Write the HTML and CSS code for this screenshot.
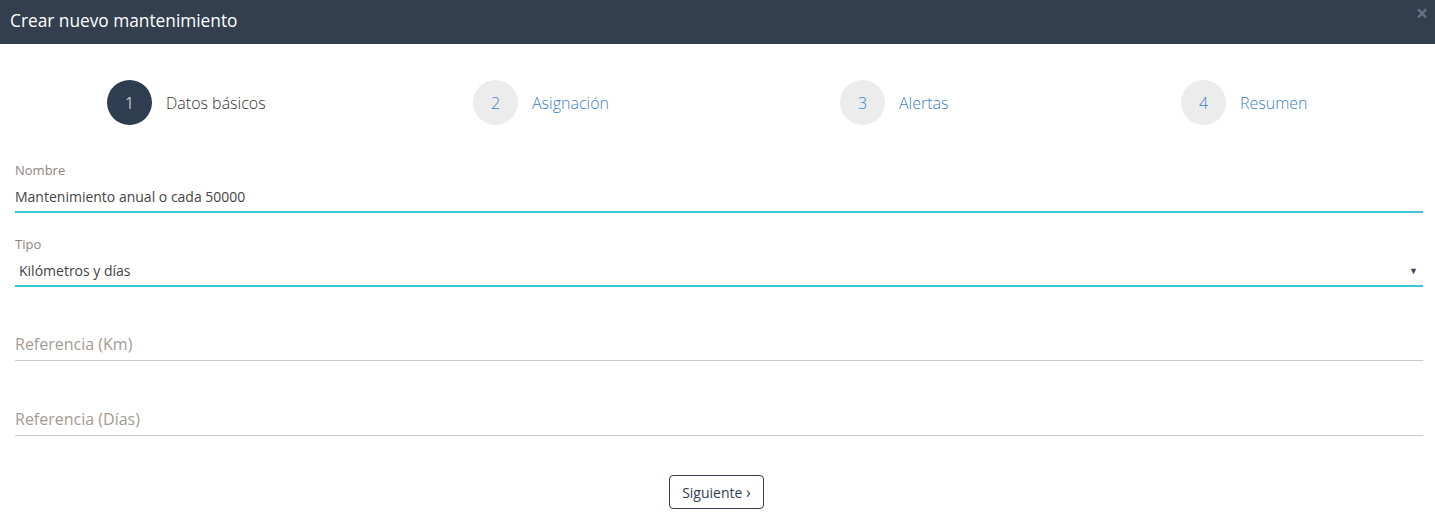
FILE: index.html
```html
<!DOCTYPE html>
<html lang="es">
<head>
<meta charset="utf-8">
<title>Crear nuevo mantenimiento</title>
<link rel="stylesheet" href="styles.css">
</head>
<body>
<div class="modal">
  <header class="modal-header">
    <h1 class="modal-title">Crear nuevo mantenimiento</h1>
    <span class="close">×</span>
  </header>
  <div class="steps">
    <div class="step step-1 active"><span class="num">1</span><span class="label">Datos básicos</span></div>
    <div class="step step-2"><span class="num">2</span><span class="label">Asignación</span></div>
    <div class="step step-3"><span class="num">3</span><span class="label">Alertas</span></div>
    <div class="step step-4"><span class="num">4</span><span class="label">Resumen</span></div>
  </div>
  <form class="form">
    <div class="field filled f-nombre">
      <label class="flabel">Nombre</label>
      <div class="value">Mantenimiento anual o cada 50000</div>
    </div>
    <div class="field filled select f-tipo">
      <label class="flabel">Tipo</label>
      <div class="value">Kilómetros y días<span class="caret">▼</span></div>
    </div>
    <div class="field empty f-km">
      <div class="placeholder">Referencia (Km)</div>
    </div>
    <div class="field empty f-dias">
      <div class="placeholder">Referencia (Días)</div>
    </div>
    <div class="actions">
      <button type="button" class="btn">Siguiente <span class="chev">›</span></button>
    </div>
  </form>
</div>
</body>
</html>
```
FILE: styles.css
```css
* { box-sizing: border-box; }
html, body { margin: 0; padding: 0; background: #fff; }
body { font-family: "Open Sans", "Liberation Sans", sans-serif; color: #333; }
.modal { width: 1435px; height: 523px; background: #fff; overflow: hidden; }
.modal-header {
  height: 44px;
  background: #333f4f;
  display: flex;
  align-items: center;
  padding: 0 10px;
  position: relative;
}
.modal-title {
  margin: 0;
  font-size: 17.3px;
  font-weight: 400;
  color: #fff;
  line-height: 1;
  padding-bottom: 2px;
}
.close {
  position: absolute;
  top: 2px;
  right: 7px;
  font-size: 21px;
  font-weight: 700;
  line-height: 22px;
  color: #687284;
}
.steps {
  display: flex;
  padding: 36px 0 0 107px;
  height: 111px;
}
.step { display: flex; align-items: center; height: 45px; }
.step-1 { width: 366px; }
.step-2 { width: 367px; }
.step-3 { width: 341px; }
.num {
  width: 45px; height: 45px; border-radius: 50%;
  background: #ececec;
  color: #3b7fc4;
  display: flex; align-items: center; justify-content: center;
  font-size: 16px;
  font-weight: 300;
  margin-right: 14px;
}
.label { font-size: 16px; font-weight: 300; color: #3b7fc4; }
.step.active .num { background: #2e3d50; color: #fff; }
.step.active .label { color: #333; }
.form { padding: 6px 12px 0 15px; }
.flabel {
  display: block;
  font-size: 13px;
  color: #8f8681;
  line-height: 18px;
  margin-bottom: 4px;
}
.f-tipo { margin-top: 22px; }
.value {
  font-size: 14px;
  color: #444;
  line-height: 28px;
  border-bottom: 2px solid #3ec6d3;
}
.field.select .value { padding-left: 4px; display: flex; justify-content: space-between; align-items: center; }
.caret { font-size: 9px; color: #444; margin-right: 5px; }
.field.f-km { margin-top: 45px; }
.field.f-dias { margin-top: 46px; }
.placeholder {
  font-size: 16px;
  color: #a39a94;
  line-height: 24px;
  padding-bottom: 4px;
  border-bottom: 1px solid #c8c9cc;
}
.actions { display: flex; justify-content: center; padding-top: 39px; }
.btn {
  font-family: "Open Sans", "Liberation Sans", sans-serif;
  font-size: 14px;
  color: #333f4f;
  background: #fff;
  border: 1px solid #333f4f;
  border-radius: 4px;
  height: 34px;
  width: 95px;
  padding: 0;
  margin-right: 5px;
}
.chev { font-size: 16px; }
```
